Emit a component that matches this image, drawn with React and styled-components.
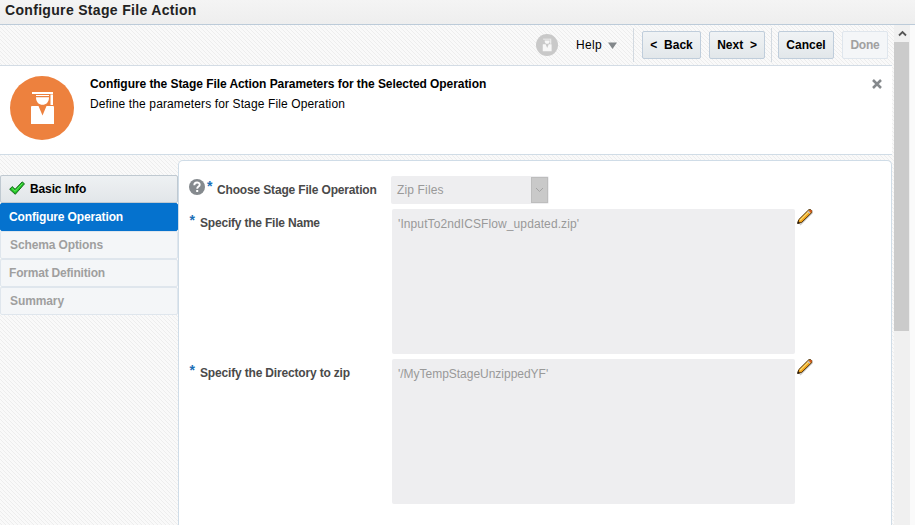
import React from "react";
import styled, { createGlobalStyle, css } from "styled-components";

const GlobalStyle = createGlobalStyle`
  * { box-sizing: border-box; }
  html, body { margin: 0; padding: 0; overflow: hidden; }
  body { font: 12px/14px "Liberation Sans", Arial, sans-serif; color: #000; background: #fafafa; }
  svg { display: block; flex: none; }
`;

const hatch = css`
  background-color: #fafafa;
  background-image: repeating-linear-gradient(45deg, #f9f9f9 0 1.414px, #ededed 1.414px 2.121px, #fafafa 2.121px 2.828px);
`;

const Page = styled.div`
  width: 915px;
  height: 525px;
  display: flex;
  flex-direction: column;
  overflow: hidden;
`;

const TitleBar = styled.header`
  flex: none;
  height: 25px;
  padding: 2px 5px 0;
  border-bottom: 1px solid #bccbd9;
  background: linear-gradient(#f4f4f4, #eeeeee);
  color: #222;
  font-size: 14px;
  line-height: 16px;
  font-weight: bold;
`;

const Body = styled.div`
  flex: 1;
  min-height: 0;
  display: flex;
`;

const Main = styled.main`
  ${hatch}
  width: 894px;
  display: flex;
  flex-direction: column;
`;

const Toolbar = styled.div`
  flex: none;
  width: 892px;
  height: 41px;
  display: flex;
  align-items: center;
  padding: 0 4px 0 536px;
  border-bottom: 1px solid #d3dce5;
`;

const HelpMenu = styled.div`
  display: flex;
  align-items: center;
  gap: 6px;
  margin: 0 16px 0 18px;
`;

const Divider = styled.div`
  width: 1px;
  height: 34px;
  background: #d3dae1;
  margin: 0 ${(p) => p.$after}px 0 0;
`;

const Button = styled.button`
  width: ${(p) => p.$width}px;
  height: 28px;
  margin: 0 ${(p) => p.$gap || 0}px 0 0;
  padding: 0 0 1px;
  flex: none;
  border: 1px solid #bfcddb;
  border-radius: 2px;
  background: linear-gradient(#f0f3f5, #e2e7ea);
  color: #000;
  font: bold 12px/14px "Liberation Sans", Arial, sans-serif;
  white-space: pre;
  &:disabled {
    border-color: #dfe6ed;
    background: #f4f6f8;
    color: #a0a0a0;
  }
`;

const Text = styled.span`
  letter-spacing: ${(p) => p.$track || 0}px;
  white-space: pre;
`;

const Banner = styled.section`
  flex: none;
  width: 892px;
  height: 89px;
  display: flex;
  padding: 10px 10px 0;
  border-bottom: 1px solid #d0dce6;
  background: #fff;
`;

const BannerCopy = styled.div`
  flex: 1;
  display: flex;
  flex-direction: column;
  gap: 6px;
  padding: 1px 0 0 16px;
`;

const CloseIcon = styled.svg`
  margin-top: 3px;
`;

const Workspace = styled.div`
  flex: 1;
  min-height: 0;
  display: flex;
`;

const Steps = styled.nav`
  width: 178px;
  padding-top: 20px;
`;

const Step = styled.div`
  height: 28px;
  display: flex;
  align-items: center;
  gap: 5px;
  padding: 0 0 1px ${(p) => p.$inset}px;
  border: 1px solid #dfe6ed;
  border-radius: 2px;
  background: #f4f6f8;
  color: #9f9f9f;
  font-weight: bold;
  ${(p) => p.$state === "done" && css`
    border-color: #bfc9d1;
    background: linear-gradient(#eef1f3, #e2e6e9);
    color: #000;
  `}
  ${(p) => p.$state === "current" && css`
    border-color: #0572ce;
    background: #0572ce;
    color: #fff;
  `}
`;

const Panel = styled.section`
  width: 714px;
  margin-top: 5px;
  padding: 16px 10px 0;
  border: 1px solid #cfdce7;
  border-bottom: 0;
  border-radius: 5px 5px 0 0;
  background: #fff;
`;

const Field = styled.div`
  display: flex;
  align-items: flex-start;
  height: ${(p) => p.$height}px;
`;

const Label = styled.label`
  width: ${(p) => p.$width}px;
  display: flex;
  align-items: flex-start;
  color: #4a4a4a;
  font-weight: bold;
`;

const Required = styled.span`
  width: ${(p) => p.$width}px;
  padding: ${(p) => p.$top}px 0 0 ${(p) => p.$inset}px;
  color: #1b6fb5;
  font-size: 14px;
  line-height: 14px;
`;

const LabelText = styled(Text)`
  padding-top: ${(p) => p.$top}px;
`;

const HelpMark = styled.svg`
  margin-top: 2px;
`;

const Select = styled.div`
  width: 158px;
  height: 28px;
  margin-top: -1px;
  padding: 1px 1px 1px 6px;
  display: flex;
  align-items: center;
  justify-content: space-between;
  border-radius: 2px;
  background: #eeeef0;
  color: #999;
`;

const SelectArrow = styled.div`
  width: 17px;
  height: 26px;
  display: grid;
  place-items: center;
  border: 1px solid #bdbdbd;
  background: #c9c9c9;
`;

const Area = styled.div`
  width: 403px;
  height: 145px;
  padding: 8px 6px;
  margin-right: 2px;
  border-radius: 2px;
  background: #eeeef0;
  color: #999;
`;

const ScrollBar = styled.aside`
  width: 16px;
  background: #f0f0f0;
  display: flex;
  flex-direction: column;
`;

const ScrollUp = styled.div`
  height: 17px;
  display: grid;
  place-items: center;
`;

const ScrollThumb = styled.div`
  width: 15px;
  height: 289px;
  background: #cbcbcb;
`;

function GraduateIcon({ size, color, ink, inkScale = 1 }) {
  return (
    <svg width={size} height={size} viewBox="0 0 64 64">
      <circle cx="32" cy="32" r="32" fill={color} />
      <g fill={ink} transform={`translate(32 32) scale(${inkScale}) translate(-32 -32)`}>
        <path d="M22 16h21v2H22zM26 19h13v1H26zM40.500 18.500h2.500V29h-2.500z" />
        <path d="M26 21.300h13c0 5-3 7.500-6.500 7.500S26 26.300 26 21.300z" />
        <path d="M22 30h6.500l4 9.500 4-9.500H43a1 1 0 0 1 1 1v17H21V31a1 1 0 0 1 1-1z" />
      </g>
    </svg>
  );
}

function CheckIcon() {
  return (
    <svg width="16" height="15" viewBox="0 0 16 15">
      <path d="M.7 8.300 3.200 5.600l2.900 2.700L13.200.9l2.300 1.900L6.300 13.300z" fill="#22c322" stroke="#14691c" strokeWidth="1" strokeLinejoin="round" />
      <path d="m2.800 7.300 3.400 3L13.400 2.500" fill="none" stroke="#62ee62" />
    </svg>
  );
}

function HelpIcon() {
  return (
    <HelpMark width="16" height="16" viewBox="0 0 16 16">
      <circle cx="8" cy="8" r="8" fill="#858a8e" />
      <path d="M5.300 6.200c0-3.600 5.400-3.500 5.400-.5 0 2-2.500 1.800-2.500 4" fill="none" stroke="#fff" strokeWidth="1.900" />
      <path d="M7.200 11h2v2h-2z" fill="#fff" />
    </HelpMark>
  );
}

function PencilIcon() {
  return (
    <svg width="17" height="17" viewBox="0 0 17 17">
      <path d="m3 16 12.500-12.500" stroke="#a5a5a5" strokeWidth="1.500" opacity=".6" />
      <path d="m.700 14.300 1-3.600L11.800.700h2l1 1v1.800L4.700 13.400z" fill="#f2a41c" stroke="#4d3109" />
      <path d="m3 11.300 8.500-8.500" stroke="#ffe278" strokeWidth="1.200" />
      <path d="m10.500 2.800 2 2 1-1-2-2z" fill="#b9bcc9" />
      <path d="m11.800 1.800 2 2 1-1-.2-1.300-1-.7z" fill="#d4571d" />
      <path d="m.300 15 .7-3 2.200 2.300z" fill="#28190a" />
    </svg>
  );
}

const steps = [
  { name: "Basic Info", state: "done", inset: 8, track: -0.12 },
  { name: "Configure Operation", state: "current", inset: 8, track: -0.14 },
  { name: "Schema Options", inset: 9, track: -0.12 },
  { name: "Format Definition", inset: 8, track: -0.2 },
  { name: "Summary", inset: 9, track: -0.1 },
];

const areas = [
  { label: "Specify the File Name", labelTrack: -0.2, value: "'InputTo2ndICSFlow_updated.zip'", track: 0.1 },
  { label: "Specify the Directory to zip", labelTrack: -0.17, value: "'/MyTempStageUnzippedYF'", track: -0.02 },
];

export default function App() {
  return (
    <Page>
      <GlobalStyle />
      <TitleBar><Text $track={0.32}>Configure Stage File Action</Text></TitleBar>
      <Body>
        <Main>
          <Toolbar>
            <GraduateIcon size={22} color="#c9c9c9" ink="#f7f7f7" inkScale={1.12} />
            <HelpMenu>
              <Text $track={0.35}>Help</Text>
              <svg width="9" height="7" viewBox="0 0 9 7"><path d="M0 .500h9L4.500 7z" fill="#82878a" /></svg>
            </HelpMenu>
            <Divider $after={8} />
            <Button $width={59} $gap={8}>{"<  Back"}</Button>
            <Button $width={56} $gap={6}>{"Next  >"}</Button>
            <Divider $after={6} />
            <Button $width={56} $gap={8}>Cancel</Button>
            <Button $width={46} disabled><Text $track={-0.2}>Done</Text></Button>
          </Toolbar>
          <Banner>
            <GraduateIcon size={64} color="#ed813e" ink="#fff" />
            <BannerCopy>
              <Text as="strong" $track={-0.06}>Configure the Stage File Action Parameters for the Selected Operation</Text>
              <Text $track={0.12}>Define the parameters for Stage File Operation</Text>
            </BannerCopy>
            <CloseIcon width="10" height="10" viewBox="0 0 10 10">
              <path d="m1 1 8 8M9 1 1 9" stroke="#85898c" strokeWidth="2.500" />
            </CloseIcon>
          </Banner>
          <Workspace>
            <Steps>
              {steps.map((s) => (
                <Step key={s.name} $state={s.state} $inset={s.inset}>
                  {s.state === "done" && <CheckIcon />}
                  <Text $track={s.track}>{s.name}</Text>
                </Step>
              ))}
            </Steps>
            <Panel>
              <Field $height={32}>
                <Label $width={202}>
                  <HelpIcon />
                  <Required $width={12} $top={2} $inset={2}>*</Required>
                  <LabelText $track={-0.16} $top={6}>Choose Stage File Operation</LabelText>
                </Label>
                <Select>
                  <Text $track={0.15}>Zip Files</Text>
                  <SelectArrow>
                    <svg width="9" height="6" viewBox="0 0 9 6"><path d="m1 1 3.500 3.500L8 1" fill="none" stroke="#a4a4a4" /></svg>
                  </SelectArrow>
                </Select>
              </Field>
              {areas.map((a) => (
                <Field key={a.label} $height={150}>
                  <Label $width={203}>
                    <Required $width={11} $top={4} $inset={0.5}>*</Required>
                    <LabelText $track={a.labelTrack} $top={7}>{a.label}</LabelText>
                  </Label>
                  <Area><Text $track={a.track}>{a.value}</Text></Area>
                  <PencilIcon />
                </Field>
              ))}
            </Panel>
          </Workspace>
        </Main>
        <ScrollBar>
          <ScrollUp>
            <svg width="9" height="7" viewBox="0 0 9 7"><path d="M1 5.500 4.500 2 8 5.500" fill="none" stroke="#555" strokeWidth="1.800" /></svg>
          </ScrollUp>
          <ScrollThumb />
        </ScrollBar>
      </Body>
    </Page>
  );
}
